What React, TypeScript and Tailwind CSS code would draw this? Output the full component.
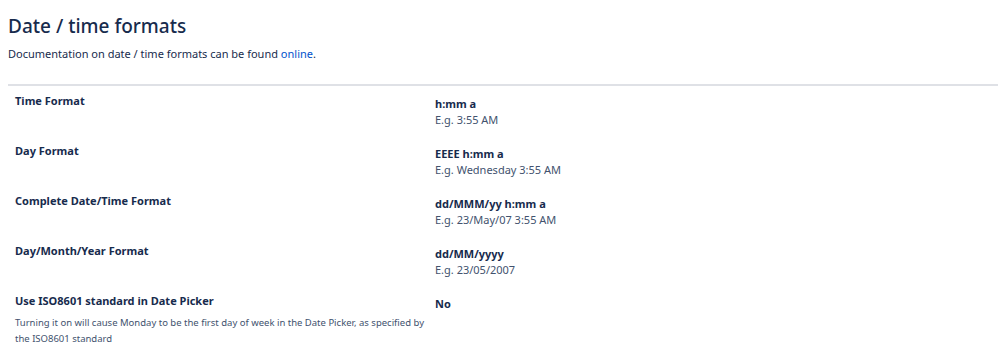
const ROWS = [
  { label: "Time Format", value: "h:mm a", example: "E.g. 3:55 AM" },
  { label: "Day Format", value: "EEEE h:mm a", example: "E.g. Wednesday 3:55 AM" },
  { label: "Complete Date/Time Format", value: "dd/MMM/yy h:mm a", example: "E.g. 23/May/07 3:55 AM" },
  { label: "Day/Month/Year Format", value: "dd/MM/yyyy", example: "E.g. 23/05/2007" },
];

export default function App() {
  return (
    <div
      className="w-[998px] h-[356px] overflow-hidden bg-white text-[#172b4d]"
      style={{ fontFamily: '"Noto Sans", "Open Sans", sans-serif' }}
    >
      <div className="pl-2 pt-[12px]">
        <h2 className="text-[19px] leading-[28px] font-medium">Date / time formats</h2>
        <p className="mt-[6px] text-[11px] leading-4 text-[#172b4d]">
          Documentation on date / time formats can be found{" "}
          <a href="#" className="text-[#0052cc]">online</a>.
        </p>
        <div className="mt-[22px] h-[2px] bg-[#dfe1e6]" />
        <div className="flex flex-col">
          {ROWS.map((r) => (
            <div key={r.label} className="flex h-[50px] pt-[7px]">
              <div className="w-[427px] pl-[7px] text-[11px] font-bold leading-4">{r.label}</div>
              <div className="pt-[3px] text-[11px] leading-4">
                <div className="font-bold">{r.value}</div>
                <div className="text-[#42526e]">{r.example}</div>
              </div>
            </div>
          ))}
          <div className="flex pt-[7px]">
            <div className="w-[427px] pl-[7px]">
              <div className="text-[11px] font-bold leading-4">Use ISO8601 standard in Date Picker</div>
              <p className="mt-[6px] text-[9.5px] leading-4 text-[#42526e]">
                Turning it on will cause Monday to be the first day of week in the Date Picker, as specified by the ISO8601 standard
              </p>
            </div>
            <div className="pt-[3px] text-[11px] font-bold leading-4">No</div>
          </div>
        </div>
      </div>
    </div>
  );
}
